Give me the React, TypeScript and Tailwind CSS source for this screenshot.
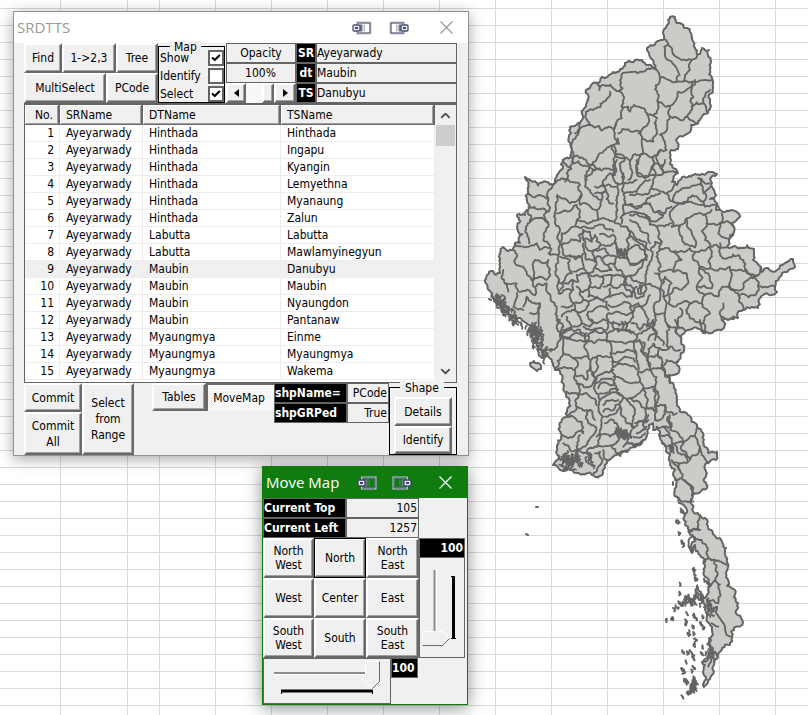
import React, { useState } from "react";
import type { ReactNode } from "react";
import { Check, ChevronDown, ChevronUp } from "lucide-react";

/* ---------- map geometry ---------- */

type Point = [number, number];

const toPoints = (text: string): Point[] =>
  text
    .trim()
    .split(/\s+/)
    .map((pair) => pair.split(",").map(Number) as Point);

function randomFrom(seed: number) {
  let s = (seed * 2654435761) >>> 0;
  const next = () => {
    s = (s + 0x6d2b79f5) >>> 0;
    let t = s;
    t = Math.imul(t ^ (t >>> 15), t | 1);
    t ^= t + Math.imul(t ^ (t >>> 7), t | 61);
    return ((t ^ (t >>> 14)) >>> 0) / 4294967296;
  };
  return next;
}

/* Turns straight survey lines into an irregular natural boundary. */
function rough(points: Point[], step: number, amount: number, seed: number, closed = false) {
  const rand = randomFrom(seed);
  const out: Point[] = [];
  const split = (a: Point, b: Point) => {
    const dx = b[0] - a[0];
    const dy = b[1] - a[1];
    if (Math.hypot(dx, dy) < step) {
      out.push(b);
      return;
    }
    const k = (rand() - 0.5) * amount;
    const m: Point = [(a[0] + b[0]) / 2 - dy * k, (a[1] + b[1]) / 2 + dx * k];
    split(a, m);
    split(m, b);
  };
  out.push(points[0]);
  for (let i = 1; i < points.length; i++) split(points[i - 1], points[i]);
  if (closed) split(points[points.length - 1], points[0]);
  return "M" + out.map((p) => p[0].toFixed(1) + " " + p[1].toFixed(1)).join("L") + (closed ? "Z" : "");
}

const COUNTRY = `668,20 670,17 675,17 677,23 682,24 687,28 690,32 692,39 695,48 697,54 700,54 702,48 709,50 711,61 712,78 713,88 710,101 711,106 708,113 704,114 700,119 696,124 691,125 690,132 685,135 680,136 676,140 678,149 671,150 671,160 670,164 676,169 678,173 672,182 677,185 688,177 700,175 717,174 710,179 712,187 716,195 710,199 717,203 716,210 723,212 738,213 740,217 732,223 734,232 729,240 727,247 740,248 754,249 753,260 760,266 762,272 768,268 777,270 785,263 793,259 795,267 787,272 780,277 775,287 777,292 763,295 758,308 752,307 743,310 739,311 738,318 730,319 723,317 721,330 703,333 688,330 681,340 681,353 677,362 677,374 667,377 670,383 673,383 674,388 677,397 677,403 688,415 697,427 703,433 703,442 708,453 717,452 716,460 707,463 706,475 707,488 693,495 693,508 700,515 708,528 720,538 726,548 727,562 726,577 735,590 738,603 741,618 743,622 732,637 722,648 717,654 718,657 713,670 708,682 704,687 703,672 705,665 702,662 710,650 711,637 712,627 707,613 717,607 702,602 708,590 708,582 705,567 700,555 695,545 692,553 689,530 685,525 679,503 677,497 676,480 675,470 670,465 670,455 663,443 659,435 657,428 653,430 653,423 649,425 647,435 642,443 630,448 627,452 613,457 607,460 603,470 595,477 583,474 577,473 568,468 560,470 553,465 557,447 562,435 567,410 565,392 562,380 553,365 547,355 542,358 537,346 540,333 530,325 520,318 515,322 508,313 500,303 492,293 485,282 487,275 493,271 496,275 500,273 499,257 503,247 513,250 515,243 520,243 517,227 517,215 525,215 527,202 528,190 525,177 530,180 547,182 553,185 557,175 563,160 570,143 571,133 570,127 578,123 583,117 583,110 587,102 586,90 592,84 597,83 602,77 613,72 625,63 642,60 648,65 656,69 650,57 647,50 658,41 664,39 663,32 669,23`;

interface Sheet {
  place: string;
  lines: string;
}

/* Township boundaries, surveyed in sheets at three units to the pixel. */
const SHEETS: Sheet[] = [
  {
    place: "translate(570 0) scale(0.3333)",
    lines: `282,118 295,135 308,160 335,180 365,180 382,165
295,135 283,140 285,165 305,185 320,205 320,245
365,180 360,210 345,225 340,245
258,208 270,235 320,245 370,245 425,240
258,208 215,215 165,218 150,240 158,265 150,275 160,300 155,320 175,320 180,335 192,315 222,325 232,345 262,355
82,248 88,270 155,268
120,275 118,290 100,305 90,322 48,335 45,350 60,375 88,378 95,392 130,388 138,370 155,355 155,320
270,235 262,280 265,310 250,345
265,305 300,318 300,350 280,400 270,405
300,318 320,295 325,275 370,245
375,240 370,290 365,320 350,350 330,360 300,350
420,270 405,290 400,310 365,320
400,310 410,335
350,350 385,370
138,370 135,400 145,430 130,435 85,465 65,495 5,475
145,400 175,388 205,392 215,420 250,425 262,400 258,360
205,400 232,375 235,350
130,435 135,460 180,482 220,460 215,425
220,460 205,485 208,530 235,530 245,500 250,470 220,460
250,470 270,450 290,450 285,425 275,405
125,440 135,490 135,520
65,495 80,505 110,505 135,510
135,465 165,475 160,540
180,485 185,510 175,540
270,450 265,490 280,520 320,515
30,370 25,400 5,430 10,475 0,500
65,495 50,540
60,375 15,400
143,415 147,432 140,425`,
  },
  {
    place: "translate(480 160) scale(0.3333)",
    lines: `248,0 275,25 260,40 255,65
275,5 345,30 360,25
345,30 320,50 315,80 330,90 350,110
218,75 240,60 300,75 305,105 270,130 255,115 230,110
345,100 375,95 372,60 390,40 405,45
345,80 370,75 408,80
410,0 412,70 410,110 405,190
430,40 425,90 435,130 425,190
412,70 430,70 470,60
218,75 205,120 205,200 210,280
232,105 228,150 225,190 240,250
145,100 165,112 205,115
145,140 180,148 205,155
140,150 150,185 205,188
150,185 148,250
230,160 290,135 300,155 290,185 245,220 240,250
305,105 300,135 350,150 355,180
350,110 365,120 360,140 350,150
365,120 378,92 400,130
290,180 320,190 400,185
290,200 340,205 400,215
105,255 130,260 170,250 180,270 210,265
100,270 105,310 130,320 150,350 160,380
205,300 165,300 160,330 155,360 200,360 210,330 205,300
205,280 235,285 240,255 250,250 300,245 310,210
235,285 230,330 235,370 240,400
75,370 110,370 115,395 165,405
165,405 165,380 200,370 205,400
70,330 75,370 85,395
110,400 100,440 130,450
130,440 140,410 180,430 170,460 150,460
180,430 175,480 190,540
205,400 230,440 240,480 230,500 240,540
240,290 270,300 275,340 250,380 240,390
433,100 470,95 510,60
435,135 510,135
430,165 480,170 510,180
410,190 440,200 440,240
440,200 480,240 505,270
310,210 330,215 335,245 310,240 310,210
335,245 345,225 365,255 345,270 320,265 310,240
360,222 400,225 408,250 370,255
250,250 250,285 290,290 315,280 310,250
270,290 305,290 312,325 280,335
315,280 320,300 345,305 340,270
345,270 375,265 385,285 350,290
350,290 345,320 325,340 310,325
385,285 408,290 405,310 385,315 365,300
408,250 412,290 445,300
440,240 445,270 475,255 500,290 450,310 445,300 445,270
405,310 410,330 440,350 480,325 490,305
345,320 365,335 395,330 385,315
330,345 365,350 370,370 360,385 330,380
365,350 395,345 390,375 370,380
395,345 430,350 440,375 410,385 390,375
275,360 295,365 290,345 325,340 330,375 300,395 290,380
235,365 250,370 275,360 280,390 235,400
300,395 310,420 280,430 275,395
330,380 325,410 355,415 385,410 390,385
385,410 430,400 455,410 460,385 440,375
280,430 270,440 245,440
310,420 325,425 320,445 290,455 285,435
325,425 350,410 380,425 385,450 330,455
385,435 450,430 460,455 385,460
245,470 290,455 305,490 275,500 260,470
230,480 250,500 240,520 275,500
305,490 330,500 340,490 325,455
330,480 385,480 380,510 350,515 310,500
385,460 385,485 450,485 460,455
240,525 300,510 320,520 315,540
400,485 400,505 430,510 455,520
425,485 428,512
435,485 438,512
460,455 470,440 500,430 510,405
440,350 455,410
480,375 490,375 485,400 475,400 480,375
455,490 480,510 510,490`,
  },
  {
    place: "translate(630 160) scale(0.3333)",
    lines: `20,0 20,40 45,55 75,45 75,10 100,15 105,0
100,15 100,40 75,50 65,85 20,100 0,105
65,85 90,95 110,100 130,80 135,65
0,135 50,130 90,100
130,125 140,95 155,85 215,75 205,55
110,100 130,125 220,125 225,140 270,150
215,75 225,100 220,125
205,55 240,70
220,100 240,80
130,145 160,132 220,135
60,130 70,155 105,160 125,140
50,165 75,185 100,165 80,155
125,200 130,145
125,200 170,175 220,165 245,150
0,165 50,175 80,200 125,190
80,200 95,245 75,245 65,300 50,340 45,375
0,180 30,210 60,250
150,200 150,225 175,255 195,262 190,230 175,205 170,175
225,165 230,190 225,240 240,260 245,290
230,190 270,190 275,160
270,190 265,220 290,235 310,225
270,190 310,195
95,245 90,270 130,275 180,265 215,270 240,260
80,290 90,270
80,290 85,330 130,335 155,300 130,275
240,260 290,262
270,250 275,290 340,300 345,325 385,345 392,320
195,275 190,300 210,320 240,325 245,290
210,320 200,380 245,385 235,340 210,320
240,325 270,325 300,320 305,350 300,385 270,390 265,410 225,405 200,380
305,330 350,330 370,355 340,385 300,385
385,345 370,350 385,380 380,400 330,405
385,380 435,380
300,385 325,400 340,450
280,430 275,480
130,335 170,340 175,370 130,385 115,430
115,430 130,440 185,430 215,430 225,405
215,430 240,460 220,490 195,485 170,460 185,430
220,490 225,520
150,445 140,490 165,510
45,375 75,380 75,460 105,460 110,430 90,340 75,340
75,460 75,540
105,460 110,490 150,530
0,225 45,280 50,300 0,315
100,370 105,350 125,370 115,400 100,410
0,350 40,370
20,380 15,410 40,410 45,375
0,440 25,430 45,460 50,500 75,510`,
  },
  {
    place: "translate(480 320) scale(0.3333)",
    lines: `240,50 250,65 250,100 225,150
250,50 300,60 325,60 325,110 280,115 250,100
200,90 240,60
240,45 300,40 325,45 325,60
325,45 345,25 380,40 390,65
380,40 420,30 470,45 460,65
280,115 285,165 320,180 330,130 325,110
225,150 280,150
260,215 295,225 290,190 285,165
295,190 330,200 345,175
325,65 390,65 395,110 350,110 330,120
390,65 460,65 470,110 475,150 400,140 395,110
395,100 465,100
395,125 465,125
460,65 495,70 510,130 510,150 475,155
400,170 455,190 480,185 475,155
400,140 405,175 430,230 465,230 490,205 480,185
430,230 420,260 440,310 460,325 465,280 440,240
490,205 500,260 500,300 490,330
450,235 500,265
350,110 355,140 335,160 350,175 400,150
330,140 350,180 360,240 370,290 360,330 350,380
345,190 400,180
355,205 405,190
360,220 415,210
360,240 425,225
370,255 415,240
370,275 420,245
295,225 340,235 350,255
295,225 290,260 262,290
290,260 330,270 345,300
262,290 305,305 310,340
245,345 280,350 310,335
330,270 325,310 345,320
345,320 335,350 310,380 270,390 250,370
375,290 420,260
375,310 400,300 415,330 390,350 350,350
300,345 290,380 320,400 350,380
350,380 400,375 420,345
345,400 360,395 355,440 340,460
370,390 380,420
395,380 410,400 440,390
460,325 505,300
465,310 505,285
470,340 500,320
460,350 495,340
450,370 490,360
430,380 480,375
455,330 445,370
510,150 525,200 495,205
525,200 530,270 500,265
470,45 500,30 520,0`,
  },
  {
    place: "translate(620 320) scale(0.3333)",
    lines: `90,150 130,150 150,190
100,205 110,260 135,255 160,285 170,280
135,255 130,290 105,300
85,265 110,275 105,300
150,285 155,320 110,320
120,345 155,355
145,290 150,330 190,370 210,350 230,325
125,370 155,380 190,370
190,370 185,390 210,420 235,400 240,380 225,350
165,375 175,400 205,425 180,430 155,420
180,430 185,475 220,520
185,475 165,480
240,385 245,405 265,430
130,320 155,355 150,400
160,430 180,450
85,110 100,70 130,90 150,80 180,90
60,65 85,110 90,150
90,110 125,115 125,140 135,170
125,140 140,120 175,125
120,85 120,115
85,60 105,40 130,75
140,10 145,85
100,0 110,40
165,0 170,40
240,0 255,40`,
  },
  {
    place: "translate(640 480) scale(0.3333)",
    lines: `110,50 130,65 160,65
130,0 155,30 158,50
145,150 175,145 180,110
145,155 180,150
158,165 155,215
160,170 185,180 200,215 205,235 190,250
205,235 225,240 260,255
225,240 230,260 225,300 205,320
225,300 235,370 200,360
230,380 240,415 255,440 260,465 275,470
215,430 235,440
210,510 225,515 235,525
190,545 210,530 205,560`,
  },
];

/* Short broken strokes scattered along a coast. */
function shards(path: string, spread: number, count: number, size: number, seed: number) {
  const pts = toPoints(path);
  const rand = randomFrom(seed);
  const out: string[] = [];
  for (let i = 0; i < pts.length - 1; i++) {
    for (let n = 0; n < count; n++) {
      const t = rand();
      const x = pts[i][0] + (pts[i + 1][0] - pts[i][0]) * t + (rand() - 0.5) * spread;
      const y = pts[i][1] + (pts[i + 1][1] - pts[i][1]) * t + (rand() - 0.5) * spread;
      out.push(rough([[x, y], [x + (rand() - 0.4) * size, y + size * (0.4 + rand() * 0.6)]], 2, 0.9, seed + n * 17 + i));
    }
  }
  return out.join("");
}

const ISLETS = `83,420 102,388 100,415 110,380 120,340 118,368 125,372 135,362 140,352 150,355 152,366 148,348 165,350 122,312 113,125 118,160 128,185 128,195 165,268 166,280 168,295 142,400 140,430 138,422 165,405 165,415 160,440 150,455 146,462 163,460 185,430 190,440 185,350 175,320 172,340 190,360 205,370 195,385 215,375 200,400 190,410 130,515 143,518 152,514 165,495 160,525 163,535 130,575 127,568 135,572 160,562 157,572 135,600 140,608 165,600 163,610 155,620 155,630 147,638 127,650 190,500 205,495 210,480 200,520 215,505 125,90 130,95 195,300 205,310 165,480 185,520 140,545`;

const COUNTRY_PATH = rough(toPoints(COUNTRY), 3, 0.55, 11, true);

function CountryMap() {
  return (
    <svg
      className="pointer-events-none absolute left-0 top-0"
      width="808"
      height="715"
      viewBox="0 0 808 715"
      fill="none"
      stroke="#646464"
      strokeWidth="2"
      strokeLinejoin="round"
      strokeLinecap="round"
      role="img"
      aria-label="Township map"
    >
      <path d={COUNTRY_PATH} fill="#cbccc8" />
      {SHEETS.map((sheet, s) => (
        <g key={sheet.place} transform={sheet.place} strokeWidth="5.6">
          {sheet.lines.split("\n").map((line, i) => (
            <path key={line} d={rough(toPoints(line), 9, 0.5, s * 100 + i)} />
          ))}
        </g>
      ))}
      <path strokeWidth="1.8" d={shards("495,293 502,304 510,312 518,320", 9, 16, 6, 3)} />
      <path strokeWidth="1.8" d={shards("529,324 536,330 539,338", 9, 24, 5, 8)} />
      <path strokeWidth="1.8" d={shards("534,340 542,347 549,357", 11, 11, 5, 9)} />
      <path strokeWidth="1.8" d={shards("562,460 568,454 580,456 592,460", 12, 12, 9, 21)} />
      <path strokeWidth="1.8" d={shards("617,430 623,432 628,434", 7, 18, 5, 31)} />
      <path strokeWidth="1.8" d={shards("618,250 622,253 625,248", 8, 9, 5, 32)} />
      <path strokeWidth="1.8" d={shards("670,444 673,452", 4, 10, 4, 35)} />
      <path strokeWidth="1.8" d={shards("688,595 700,599 709,604 710,612", 9, 8, 4, 36)} />
      <path strokeWidth="1.8" d={shards("684,598 692,600", 7, 12, 4, 37)} />
      <path strokeWidth="1.8" d={shards("706,648 712,655", 6, 10, 4, 39)} />
      <path strokeWidth="1.8" d={shards("695,672 694,684 690,693", 4, 7, 4, 41)} />
      <path fill="#cbccc8" d={rough(toPoints("530,363 534,361 540,364 541,369 537,371"), 3, 0.5, 4, true)} />
      <path fill="#cbccc8" d={rough(toPoints("697,588 701,592 704,598 699,600 696,596"), 3, 0.5, 4, true)} />
      <g transform="translate(640 480) scale(0.3333)" strokeWidth="6">
        {toPoints(ISLETS).map(([x, y], i) => (
          <path
            key={i}
            d={rough([[x - 3, y - 4], [x + ((i * 7) % 11) - 4, y + 2], [x + ((i * 5) % 9) - 4, y + 6]], 4, 0.9, i + 60, i % 2 === 0)}
          />
        ))}
      </g>
      <path d="M489 299l2 1M536 507h2M526 534l2 1M732 319h2M673 482v3" />
    </svg>
  );
}

/* ---------- spreadsheet behind the forms ---------- */

const COLUMNS = [61, 67, 32, 56, 56, 56, 56, 56, 56, 56, 56, 56, 56, 56, 56];

function Worksheet() {
  return (
    <div className="absolute inset-0 overflow-hidden bg-white" aria-hidden="true">
      {Array.from({ length: 60 }, (_, row) => (
        <div key={row} className={row === 0 ? "flex h-[9px]" : "flex h-[17px]"}>
          {COLUMNS.map((width, i) => (
            <div key={i} className="shrink-0 border-b border-r border-[#d9d9d9]" style={{ width }} />
          ))}
          <div className="flex-1 border-b border-[#d9d9d9]" />
        </div>
      ))}
    </div>
  );
}

/* ---------- form controls ---------- */

function Button({ children, className = "" }: { children: ReactNode; className?: string }) {
  return (
    <button
      type="button"
      className={
        "flex items-center justify-center border-b-2 border-l-2 border-r-2 border-t-2 border-b-[#696969] border-l-white border-r-[#696969] border-t-white bg-[#f0f0f0] text-center shadow-[inset_-1px_-1px_0_#a0a0a0] " +
        className
      }
    >
      {children}
    </button>
  );
}

function Caption({ children, className = "" }: { children: ReactNode; className?: string }) {
  return (
    <div className={"h-5 overflow-hidden whitespace-nowrap border border-[#646464] bg-black font-bold leading-[18px] text-white " + className}>
      {children}
    </div>
  );
}

function Field({ value, label, className = "" }: { value: string; label: string; className?: string }) {
  return (
    <input
      readOnly
      aria-label={label}
      value={value}
      className={"block h-5 min-w-0 border border-[#646464] bg-[#f0f0f0] pr-px leading-[18px] outline-none " + className}
    />
  );
}

function Tick({ label, initial }: { label: string; initial: boolean }) {
  const [on, setOn] = useState(initial);
  return (
    <label className="flex h-[18px] items-center justify-between">
      {label}
      <span className="grid">
        <input
          type="checkbox"
          checked={on}
          onChange={() => setOn(!on)}
          className="col-start-1 row-start-1 size-4 appearance-none border-2 border-[#646464] bg-white"
        />
        {on && <Check className="pointer-events-none col-start-1 row-start-1 m-[3px] size-[10px]" strokeWidth={5} />}
      </span>
    </label>
  );
}

function DockIcon({ side, dark = false }: { side: "left" | "right"; dark?: boolean }) {
  const ink = dark ? "#3a4468" : "#4a4f68";
  return (
    <svg width="20" height="14" viewBox="0 0 20 14" fill="none" className={side === "right" ? "-scale-x-100" : ""}>
      <path d="M5 1.5H18.5V12.5H5Z" fill={dark ? "#107c10" : "#ffffff"} stroke="#c6c8d6" strokeWidth="2" />
      <path d="M5 2H18V12H5" stroke={ink} strokeWidth="1" />
      <path d="M8 3.500H10.500V10.500H8Z" fill="#70757e" />
      <path d="M11.500 3.500H13V10.500H11.500Z" fill="#70757e" opacity="0.500" />
      <rect x="1" y="4" width="7" height="6" rx="1" fill="#e6e7f0" stroke={ink} strokeWidth="1.300" />
      <path d="M3 7H6" stroke={ink} strokeWidth="2" />
    </svg>
  );
}

function TitleBar({ title, dark = false }: { title: string; dark?: boolean }) {
  return (
    <header
      className={
        dark
          ? "flex h-[31px] items-center bg-[#107c10] pl-[3px] pr-[15px] font-['Open_Sans','Noto_Sans',sans-serif] text-[15px] text-white"
          : "flex h-[31px] items-center bg-white pl-[3px] pr-[15px] font-['Open_Sans','Noto_Sans',sans-serif] text-[15px] text-[#999999]"
      }
    >
      <h2 className="flex-1 whitespace-nowrap pb-0.5">{title}</h2>
      <button type="button" aria-label="Dock left" className={dark ? "mr-[15px]" : "mr-[17px]"}>
        <DockIcon side="left" dark={dark} />
      </button>
      <button type="button" aria-label="Dock right" className={dark ? "mr-[27px]" : "mr-[31px]"}>
        <DockIcon side="right" dark={dark} />
      </button>
      <button type="button" aria-label="Close">
        <svg width="13" height="13" viewBox="0 0 13 13" fill="none" stroke="currentColor" strokeWidth="1.200">
          <path d="M0.500 0.500L12.500 12.500M12.500 0.500L0.500 12.500" />
        </svg>
      </button>
    </header>
  );
}

/* ---------- SRDTTS form ---------- */

const ROWS: [string, string][] = [
  ["Hinthada", "Hinthada"],
  ["Hinthada", "Ingapu"],
  ["Hinthada", "Kyangin"],
  ["Hinthada", "Lemyethna"],
  ["Hinthada", "Myanaung"],
  ["Hinthada", "Zalun"],
  ["Labutta", "Labutta"],
  ["Labutta", "Mawlamyinegyun"],
  ["Maubin", "Danubyu"],
  ["Maubin", "Maubin"],
  ["Maubin", "Nyaungdon"],
  ["Maubin", "Pantanaw"],
  ["Myaungmya", "Einme"],
  ["Myaungmya", "Myaungmya"],
  ["Myaungmya", "Wakema"],
];

const HEAD = "border-b border-r-2 border-b-[#696969] border-r-[#696969] pl-[6px] text-left font-normal shadow-[inset_1px_1px_0_#ffffff,inset_-1px_-1px_0_#a0a0a0]";

function TownshipList() {
  const [selected, setSelected] = useState(8);
  return (
    <div className="flex h-[280px] border border-[#646464] border-t-2 bg-white">
      <table className="flex-1 table-fixed border-separate border-spacing-0 self-start">
        <colgroup>
          <col className="w-[35px]" />
          <col className="w-[83px]" />
          <col className="w-[138px]" />
          <col />
        </colgroup>
        <thead>
          <tr className="h-5 bg-[#f0f0f0]">
            <th className={HEAD}>
              <span className="block pl-1">No.</span>
            </th>
            <th className={HEAD}>SRName</th>
            <th className={HEAD}>DTName</th>
            <th className={HEAD}>TSName</th>
          </tr>
        </thead>
        <tbody>
          {ROWS.map(([dt, ts], i) => (
            <tr
              key={ts}
              onClick={() => setSelected(i)}
              className={
                "h-[17px] leading-4 [&>td]:border-b [&>td]:border-r [&>td]:border-[#ededed] [&>td]:p-0 [&>td]:pl-[6px] " +
                (i === selected ? "bg-[#f0f0f0]" : "bg-white")
              }
            >
              <td>
                <span className="block pr-[5px] text-right">{i + 1}</span>
              </td>
              <td>Ayeyarwady</td>
              <td>{dt}</td>
              <td>{ts}</td>
            </tr>
          ))}
        </tbody>
      </table>
      <div className="flex w-[21px] flex-col items-center bg-[#f0f0f0]">
        <button type="button" aria-label="Scroll up" className="flex h-5 items-center">
          <ChevronUp className="size-[15px] text-[#505050]" strokeWidth={3} />
        </button>
        <div className="h-[21px] w-[19px] bg-[#cdcdcd]" />
        <div className="flex-1" />
        <button type="button" aria-label="Scroll down" className="flex h-[22px] items-center">
          <ChevronDown className="size-[15px] text-[#505050]" strokeWidth={3} />
        </button>
      </div>
    </div>
  );
}

const HATCH = "bg-[repeating-conic-gradient(#ffffff_0_25%,#f0f0f0_0_50%)] bg-[length:2px_2px]";

function SelectionForm() {
  return (
    <section className="absolute left-[13px] top-[11px] w-[456px] border border-[#929292] bg-[#f0f0f0] shadow-[0_3px_14px_rgba(0,0,0,0.35)]">
      <TitleBar title="SRDTTS" />
      <div className="pl-[10px] pr-[11px]">
        <div className="flex h-[60px]">
          <div className="flex w-[134px] flex-col">
            <div className="flex h-[30px]">
              <Button className="w-[38px]">Find</Button>
              <Button className="w-[54px]">1-&gt;2,3</Button>
              <Button className="flex-1">Tree</Button>
            </div>
            <div className="flex h-[30px]">
              <Button className="w-[82px]">MultiSelect</Button>
              <Button className="flex-1">PCode</Button>
            </div>
          </div>
          <fieldset className="relative mt-[3px] h-[57px] w-[67px] border border-black pl-px pt-[2px]">
            <legend className="absolute -top-[6px] left-[11px] bg-[#f0f0f0] px-1 leading-3">Map</legend>
            <div className="relative">
              <Tick label="Show" initial={true} />
              <Tick label="Identify" initial={false} />
              <Tick label="Select" initial={true} />
            </div>
          </fieldset>
          <div className="ml-px flex w-[70px] flex-col">
            <div className="h-5 border border-[#646464] text-center leading-[18px]">Opacity</div>
            <Field label="Opacity" value="100%" className="w-full text-center" />
            <div className={"flex h-5 " + HATCH}>
              <Button className="w-[20px]">
                <svg width="5" height="8" viewBox="0 0 5 8">
                  <path d="M5 0V8L0 4Z" />
                </svg>
              </Button>
              <div className="flex-1" />
              <Button className="w-[12px]">{""}</Button>
              <Button className="w-[22px]">
                <svg width="5" height="8" viewBox="0 0 5 8">
                  <path d="M0 0V8L5 4Z" />
                </svg>
              </Button>
            </div>
          </div>
          <div className="w-5">
            <Caption className="text-center">SR</Caption>
            <Caption className="text-center">dt</Caption>
            <Caption className="text-center">TS</Caption>
          </div>
          <div className="flex-1">
            <Field label="SR" value="Ayeyarwady" className="w-full" />
            <Field label="dt" value="Maubin" className="w-full" />
            <Field label="TS" value="Danubyu" className="w-full" />
          </div>
        </div>

        <TownshipList />

        <div className="flex h-[72px]">
          <div className="flex w-[58px] flex-col">
            <Button className="h-[29px]">Commit</Button>
            <Button className="flex-1 leading-4">
              Commit
              <br />
              All
            </Button>
          </div>
          <Button className="w-[52px] leading-4">
            Select
            <br />
            from
            <br />
            Range
          </Button>
          <Button className="ml-[18px] h-[28px] w-[54px]">Tables</Button>
          <button
            type="button"
            className={"h-[28px] w-[68px] whitespace-nowrap border-l-2 border-t-2 border-[#696969] pr-1 " + HATCH}
          >
            MoveMap
          </button>
          <div className="w-[73px]">
            <Caption>shpName=</Caption>
            <Caption>shpGRPed</Caption>
          </div>
          <div className="w-[42px]">
            <Field label="shpName" value="PCode" className="w-full text-right" />
            <Field label="shpGRPed" value="True" className="w-full text-right" />
          </div>
          <fieldset className="relative mt-1 flex-1 border border-black p-[4px] pb-0 pt-[9px]">
            <legend className="absolute -top-[7px] left-[10px] bg-[#f0f0f0] px-[5px] leading-[14px]">Shape</legend>
            <Button className="h-[29px] w-full">Details</Button>
            <Button className="h-[28px] w-full">Identify</Button>
          </fieldset>
        </div>
      </div>
    </section>
  );
}

/* ---------- Move Map form ---------- */

const MOVES = [
  ["North", "West"],
  ["North"],
  ["North", "East"],
  ["West"],
  ["Center"],
  ["East"],
  ["South", "West"],
  ["South"],
  ["South", "East"],
];

function MoveForm() {
  return (
    <section className="absolute left-[262px] top-[466px] w-[206px] border border-[#107c10] bg-[#f0f0f0] shadow-[0_3px_16px_rgba(0,0,0,0.45)]">
      <TitleBar title="Move Map" dark />
      <div className="flex">
        <div className="w-[156px]">
          <div className="flex">
            <Caption className="w-[83px]">Current Top</Caption>
            <Field label="Current Top" value="105" className="flex-1 text-right" />
          </div>
          <div className="flex">
            <Caption className="w-[83px]">Current Left</Caption>
            <Field label="Current Left" value="1257" className="flex-1 text-right" />
          </div>
          <div className="grid grid-cols-[51px_52px_1fr]">
            {MOVES.map((words) => (
              <Button
                key={words.join(" ")}
                className={"h-10 leading-[14px] " + (words.join(" ") === "North" ? "outline-1 -outline-offset-1 outline-black" : "")}
              >
                {words[0]}
                {words.length > 1 && <br />}
                {words[1]}
              </Button>
            ))}
          </div>
        </div>
        <div className="w-[46px] pt-10">
          <Caption className="pr-px text-right">100</Caption>
          <label className="relative block h-[100px] border border-t-0 border-[#646464]">
            <svg width="44" height="99" viewBox="0 0 44 99" fill="none">
              <path d="M14.500 12V80" stroke="#8c8c8c" strokeWidth="2" />
              <path d="M16.500 12V80" stroke="#ffffff" />
              <path d="M33.500 18V80" stroke="#000000" strokeWidth="3" />
              <path d="M31 18.500H35M31 80.500H36" stroke="#000000" />
              <path d="M2.500 73.500H22.500L29.500 80.500L22.500 87.500H2.500Z" fill="#f0f0f0" stroke="#ffffff" />
              <path d="M2.500 87.500H22.500L29.500 80.500" stroke="#696969" />
            </svg>
            <input type="range" aria-label="Vertical step" defaultValue={100} className="absolute inset-0 size-full opacity-0" />
          </label>
        </div>
      </div>
      <div className="flex">
        <label className="relative block h-[46px] w-[128px] border border-[#646464]">
          <svg width="126" height="44" viewBox="0 0 126 44" fill="none">
            <path d="M10 14H104" stroke="#8c8c8c" strokeWidth="2" />
            <path d="M10 15.500H104" stroke="#ffffff" />
            <path d="M17 32H109" stroke="#000000" strokeWidth="3" />
            <path d="M17.500 31V35M108.500 31V35" stroke="#000000" />
            <path d="M101.500 2.500H115.500V22.500L108.500 29.500L101.500 22.500Z" fill="#f0f0f0" stroke="#ffffff" />
            <path d="M115.500 2.500V22.500L108.500 29.500" stroke="#696969" />
          </svg>
          <input type="range" aria-label="Horizontal step" defaultValue={100} className="absolute inset-0 size-full opacity-0" />
        </label>
        <Caption className="w-[27px]">100</Caption>
      </div>
    </section>
  );
}

export default function App() {
  return (
    <main className="relative min-h-screen overflow-hidden bg-white font-['DejaVu_Sans_Condensed','DejaVu_Sans',sans-serif] text-xs text-black">
      <Worksheet />
      <CountryMap />
      <SelectionForm />
      <MoveForm />
    </main>
  );
}
